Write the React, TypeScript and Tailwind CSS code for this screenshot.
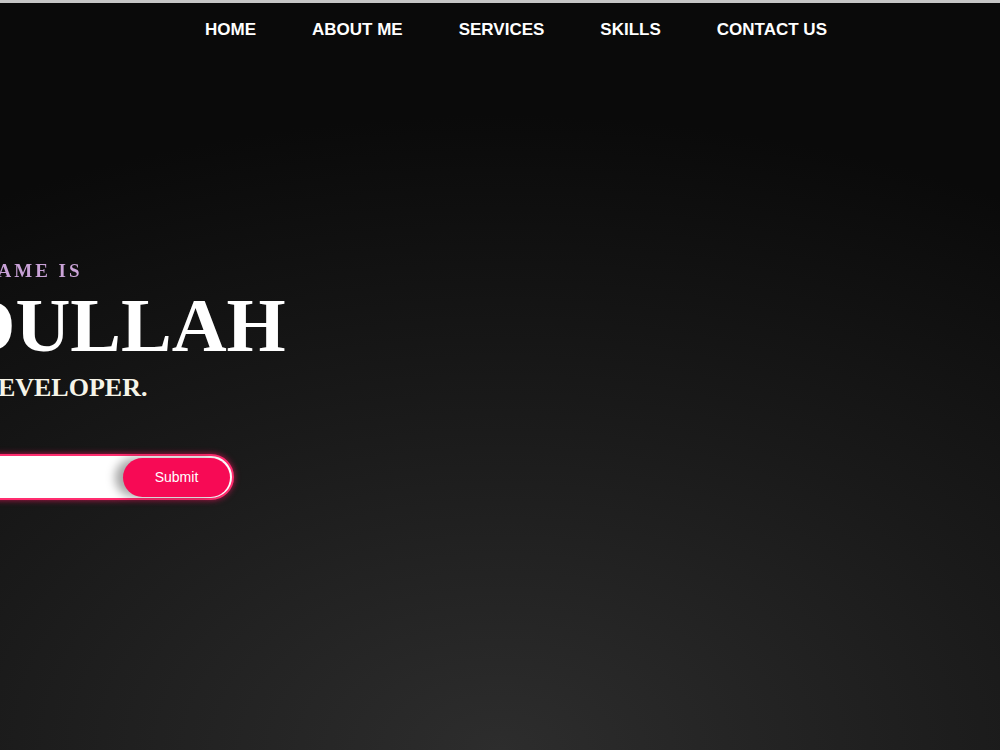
const links = ["HOME", "ABOUT ME", "SERVICES", "SKILLS", "CONTACT US"];

export default function App() {
  return (
    <div className="min-h-[750px] h-[750px] w-full overflow-hidden border-t-[3px] border-[#c6c6c6] bg-[radial-gradient(ellipse_120%_100%_at_50%_100%,#2d2d2d_0%,#1a1a1a_45%,#0a0a0a_85%)]">
      <nav className="flex justify-center gap-[56px] pl-[32px] pt-[16px]">
        {links.map((link) => (
          <a
            key={link}
            href="#"
            className="text-[17px] font-bold leading-[22px] text-white [font-family:'Comic_Sans_MS','Liberation_Sans',sans-serif]"
          >
            {link}
          </a>
        ))}
      </nav>

      <section className="-ml-[145px] mt-[219px] [font-family:'Liberation_Serif',serif]">
        <p className="-ml-[17px] text-[19px] font-bold leading-[22px] tracking-[3px] bg-[linear-gradient(90deg,#c29ad6,#ecc8dc)] bg-clip-text text-transparent">
          HELLO, MY NAME IS
        </p>
        <h1 className="mt-[5px] text-[76px] font-bold leading-[76px] text-white">
          ABDULLAH
        </h1>
        <h2 className="-ml-[30px] mt-[10px] text-[26px] font-bold leading-[30px] text-[#f6f4e8]">
          I AM A WEB DEVELOPER.
        </h2>

        <form className="mt-[51px] flex h-[46px] w-[379px] items-center justify-end rounded-full border-2 border-[#ff2d6f] bg-white pr-[2px] shadow-[0_0_6px_rgba(255,20,100,0.7)]">
          <button
            type="button"
            className="h-[39px] w-[107px] rounded-full bg-[#f70a55] text-[14px] text-white shadow-[-8px_0_10px_rgba(0,0,0,0.35)] [font-family:'Liberation_Sans',sans-serif]"
          >
            Submit
          </button>
        </form>
      </section>
    </div>
  );
}
